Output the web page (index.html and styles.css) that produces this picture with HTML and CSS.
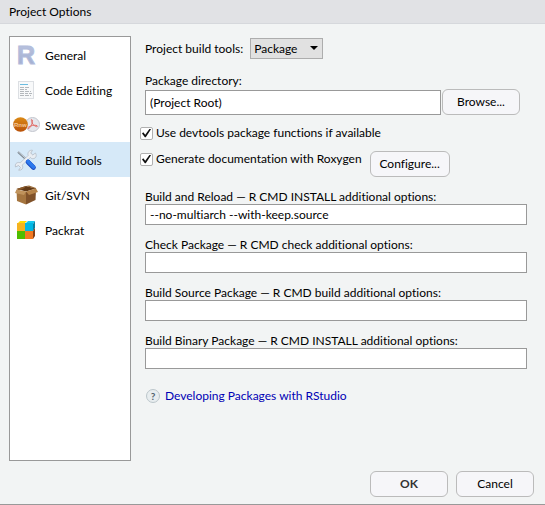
FILE: index.html
```html
<!DOCTYPE html>
<html lang="en">
<head>
<meta charset="utf-8">
<title>Project Options</title>
<link rel="stylesheet" href="styles.css">
</head>
<body>
<form class="dialog">
  <header class="titlebar">Project Options</header>
  <div class="body">
    <nav class="sections">
      <a class="section" href="#general">
        <svg class="icon" viewBox="0 0 28 24">
          <defs><linearGradient id="r" x1="0" y1="0" x2="0" y2="1"><stop offset="0" stop-color="#bcc5e0"/><stop offset="1" stop-color="#9dabcf"/></linearGradient></defs>
          <text class="r-logo" x="4" y="20" fill="url(#r)" stroke="#b3bddb" stroke-width="1">R</text>
        </svg>
        General</a>
      <a class="section" href="#code">
        <svg class="icon" viewBox="0 0 28 24">
          <rect x="5.500" y="2.500" width="15" height="17" fill="#f8f9fa" stroke="#dcdfe3"/>
          <path d="M7 5.500h8" stroke="#6bbce0"/>
          <path d="M7 8.500h9M7 10.500h7M7 12.500h11M7 14.500h8M16 14.500h3M7 16.500h11" stroke="#b4b8bc" stroke-dasharray="4 1"/>
        </svg>
        Code Editing</a>
      <a class="section" href="#sweave">
        <svg class="icon" viewBox="0 0 28 24">
          <defs><linearGradient id="o" x1="0" y1="0" x2="0" y2="1"><stop offset="0" stop-color="#db8a16"/><stop offset="1" stop-color="#b95109"/></linearGradient></defs>
          <circle cx="19.500" cy="10.500" r="7" fill="#e5e7ec" stroke="#c3c6ce"/>
          <circle cx="7.500" cy="10.500" r="7.300" fill="url(#o)"/>
          <text class="rnw" x="1" y="13">Rnw</text>
          <path d="M18.500 5.500c1.500 0 1 3 0 5.500-1 2-2.500 4-3.500 3.500-1-1 2-2.500 4.500-3s5-.2 5 .8c-.5 1.200-3-.3-4.500-2-1.200-1.500-2-4.800-1.500-4.800z" fill="none" stroke="#e0645f" stroke-width=".9"/>
        </svg>
        Sweave</a>
      <a class="section selected" href="#build" aria-current="page">
        <svg class="icon" viewBox="0 0 28 24">
          <path d="M5 3l11 10" stroke="#7d8892" stroke-width="2"/>
          <path d="M5 2.500l11 10" stroke="#c6cdd4"/>
          <path d="M6 17L19 5" stroke="#b3bbc5" stroke-width="3.600"/>
          <path d="M22.500 4l-2.800 2-2-1.800 1.800-2.900c-3-.5-5 1.800-4.500 4.500l3.500 3.700c3.500 1 6-2 4-5.500zM2.500 18l3-1.500 2 2-1.800 2.700c3 .3 4.500-1.700 4-4.200L6.500 13.500c-2.800-.5-4.800 1.500-4 4.500z" fill="#e9edf2" stroke="#b3bbc5" stroke-width=".8"/>
          <path d="M6.500 16.500L18.500 5.500" stroke="#e9edf2" stroke-width="2.400"/>
          <path d="M15 13l5.500 5.500" stroke="#1746bd" stroke-width="4.600" stroke-linecap="round"/>
          <path d="M15 12.500l5.500 5.500" stroke="#2c78ed" stroke-width="3.600" stroke-linecap="round"/>
        </svg>
        Build Tools</a>
      <a class="section" href="#vcs">
        <svg class="icon" viewBox="0 0 28 24">
          <path d="M3.500 6L13 8v12.500L4 17z" fill="#a5753f"/>
          <path d="M13 8l10-2.500-.5 10.500L13 20.500z" fill="#80522a"/>
          <path d="M3.500 5L13 2l10 2.500-10 3z" fill="#633b18"/>
          <path d="M3.500 5L13 2l-1.500 2L6 6.500z" fill="#8c5b2b"/>
          <path d="M3.500 5.500L2 9l9 2 2-3.500z" fill="#c0935c"/>
          <path d="M13 7.500l10-3L25 8l-9 3z" fill="#b58349"/>
          <path d="M13 2l3-.5 7 2.500v1z" fill="#9a6b38"/>
        </svg>
        Git/SVN</a>
      <a class="section" href="#packrat">
        <svg class="icon" viewBox="0 0 28 24">
          <path d="M4 5l3-3h7l-3 3z" fill="#ffdc00"/>
          <path d="M12 5l3-3h7l-2 3z" fill="#17c7ef"/>
          <path d="M20 5l2-3v7l-2 3z" fill="#087fa0"/>
          <path d="M20 12l2-3v8l-2 3z" fill="#884014"/>
          <rect x="4" y="4" width="8" height="8" fill="#f5b321"/>
          <rect x="12" y="4" width="8" height="8" fill="#00b7e5"/>
          <rect x="4" y="12" width="8" height="8" fill="#4fbd00"/>
          <rect x="12" y="12" width="8" height="8" fill="#f27a22"/>
        </svg>
        Packrat</a>
    </nav>
    <main class="pane">
      <div class="tools">
        <label for="tools">Project build tools:</label>
        <span class="select-wrap"><select id="tools"><option>Package</option></select></span>
      </div>
      <div class="directory">
        <label class="caption" for="dir">Package directory:</label>
        <div class="directory-row">
          <input class="text tall" id="dir" type="text" value="(Project Root)">
          <button class="button" type="button">Browse...</button>
        </div>
      </div>
      <div class="check">
        <input id="devtools" type="checkbox" checked>
        <label for="devtools">Use devtools package functions if available</label>
      </div>
      <div class="roxygen">
        <div class="check">
          <input id="roxygen" type="checkbox" checked>
          <label for="roxygen">Generate documentation with Roxygen</label>
        </div>
        <button class="button configure" type="button">Configure...</button>
      </div>
      <div class="fields">
        <div class="field">
          <label class="caption" for="reload">Build and Reload — R CMD INSTALL additional options:</label>
          <input class="text" id="reload" type="text" value="--no-multiarch --with-keep.source">
        </div>
        <div class="field">
          <label class="caption" for="checkpkg">Check Package — R CMD check additional options:</label>
          <input class="text" id="checkpkg" type="text">
        </div>
        <div class="field">
          <label class="caption" for="source">Build Source Package — R CMD build additional options:</label>
          <input class="text" id="source" type="text">
        </div>
        <div class="field">
          <label class="caption" for="binary">Build Binary Package — R CMD INSTALL additional options:</label>
          <input class="text" id="binary" type="text">
        </div>
      </div>
      <a class="help" href="#help"><span class="help-mark">?</span>Developing Packages with RStudio</a>
    </main>
  </div>
  <footer class="actions">
    <button class="button ok" type="button">OK</button>
    <button class="button" type="button">Cancel</button>
  </footer>
</form>
</body>
</html>
```
FILE: styles.css
```css
* {
  box-sizing: border-box;
}

body {
  margin: 0;
  color: #000;
  font: 12px/16px Lato, "Open Sans", sans-serif;
  font-variant-ligatures: none;
}

input,
select,
button {
  margin: 0;
  color: inherit;
  font: inherit;
}

.dialog {
  display: flex;
  flex-direction: column;
  min-height: 100vh;
  background: #f2f4f4;
  border-bottom: 1px solid #999;
}

.titlebar {
  padding: 4px 9px 3px;
  background: #e1e2e5;
  border-bottom: 1px solid #d6d8dc;
}

.body {
  display: flex;
  flex: 1;
  gap: 14px;
  padding: 12px 18px 0 9px;
}

.sections {
  flex: none;
  width: 122px;
  background: #fff;
  border: 1px solid #999;
}

.section {
  display: flex;
  align-items: center;
  gap: 4px;
  height: 35px;
  padding: 2px 0 0 3px;
  color: #000;
  text-decoration: none;
}

.section.selected {
  background: #d6e9f8;
}

.icon {
  flex: none;
  overflow: visible;
  width: 28px;
  height: 24px;
  fill: none;
}

.r-logo {
  font: bold 25px "Liberation Sans", sans-serif;
}

.rnw {
  fill: #f6c795;
  font: bold 6px "Liberation Sans", sans-serif;
}

.pane {
  flex: 1;
  min-width: 0;
}

.tools {
  display: flex;
  align-items: center;
  gap: 7px;
  padding-top: 2px;
}

.select-wrap {
  position: relative;
}

.select-wrap::after {
  position: absolute;
  top: 8px;
  right: 5px;
  border: 4px solid transparent;
  border-top: 4px solid #000;
  border-bottom: 0;
  content: "";
  pointer-events: none;
}

select {
  display: block;
  width: 73px;
  height: 21px;
  padding: 0 3px;
  appearance: none;
  background: #e1e1e1;
  border: 1px solid #adadad;
  border-radius: 0;
}

.caption {
  display: block;
}

.directory {
  padding: 14px 0 10px;
}

.directory-row {
  display: flex;
  align-items: center;
  gap: 1px;
  padding-right: 7px;
}

.text {
  display: block;
  width: 100%;
  height: 21px;
  padding: 0 4px;
  background: #fff;
  border: 1px solid #999;
}

.text.tall {
  flex: 1;
  min-width: 0;
  height: 25px;
}

.button {
  flex: none;
  width: 78px;
  height: 26px;
  padding: 0;
  background: #f6f6f9;
  border: 1px solid #bbb;
  border-radius: 6px;
}

.button.configure {
  width: 80px;
}

.button.ok {
  color: #333;
  font-weight: bold;
}

.check {
  display: flex;
  align-items: center;
  gap: 3px;
  margin-left: -5px;
}

.check input {
  display: grid;
  place-items: center;
  width: 13px;
  height: 13px;
  appearance: none;
  background: #fff;
  border: 1px solid #b0b0b0;
  border-radius: 2px;
}

.check input:checked::before {
  width: 9px;
  height: 9px;
  background: #111;
  clip-path: polygon(0 55%, 14% 43%, 36% 70%, 86% 0, 100% 8%, 42% 98%, 32% 98%);
  content: "";
}

.roxygen {
  display: flex;
  align-items: flex-start;
  gap: 8px;
  padding-top: 10px;
}

.fields {
  display: grid;
  gap: 12px;
  padding-top: 12px;
}

.field .caption {
  line-height: 15px;
}

.help {
  display: flex;
  align-items: center;
  gap: 5px;
  margin-top: 19px;
  padding-left: 1px;
  color: #0000b4;
  text-decoration: none;
}

.help-mark {
  width: 14px;
  height: 14px;
  color: #52606b;
  font-size: 10px;
  font-weight: bold;
  line-height: 12px;
  text-align: center;
  background: #e8edef;
  border: 1px solid #bcc6cb;
  border-radius: 50%;
}

.actions {
  display: flex;
  justify-content: flex-end;
  gap: 8px;
  padding: 10px 11px 7px;
}
```
